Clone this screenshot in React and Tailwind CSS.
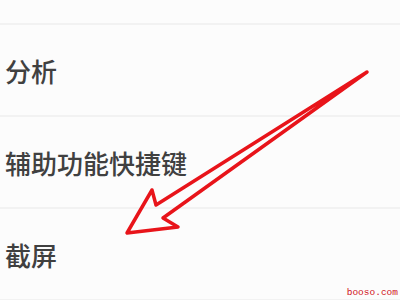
import React from "react";

const rows = ["分析", "辅助功能快捷键", "截屏"];

export default function App() {
  return (
    <main
      className="relative w-[400px] h-[300px] overflow-hidden bg-[#fcfcfc]"
      style={{ fontFamily: '"Noto Sans CJK SC", "Noto Sans", sans-serif' }}
    >
      {/* settings list */}
      <div className="flex flex-col">
        <div className="h-[25px] border-b-2 border-[#f2f2f2]" />
        {rows.map((label) => (
          <div
            key={label}
            className="h-[92px] flex items-center pl-[5px] pt-[2px] border-b-2 border-[#f2f2f2]"
          >
            <span className="text-[26px] leading-none text-[#404040] font-medium">
              {label}
            </span>
          </div>
        ))}
      </div>

      {/* red annotation arrow */}
      <svg
        className="absolute inset-0"
        width="400"
        height="300"
        viewBox="0 0 400 300"
      >
        <polygon
          points="367,72 156,205 152,190 127,233 178,227 163,218"
          fill="none"
          stroke="#e8141a"
          strokeWidth="3.5"
          strokeLinejoin="round"
          strokeLinecap="round"
        />
      </svg>

      {/* watermark */}
      <span
        className="absolute right-[2px] bottom-[3px] text-[9.5px] leading-none text-[#d0101a]"
        style={{ fontFamily: '"Liberation Mono", monospace' }}
      >
        booso.com
      </span>
    </main>
  );
}
